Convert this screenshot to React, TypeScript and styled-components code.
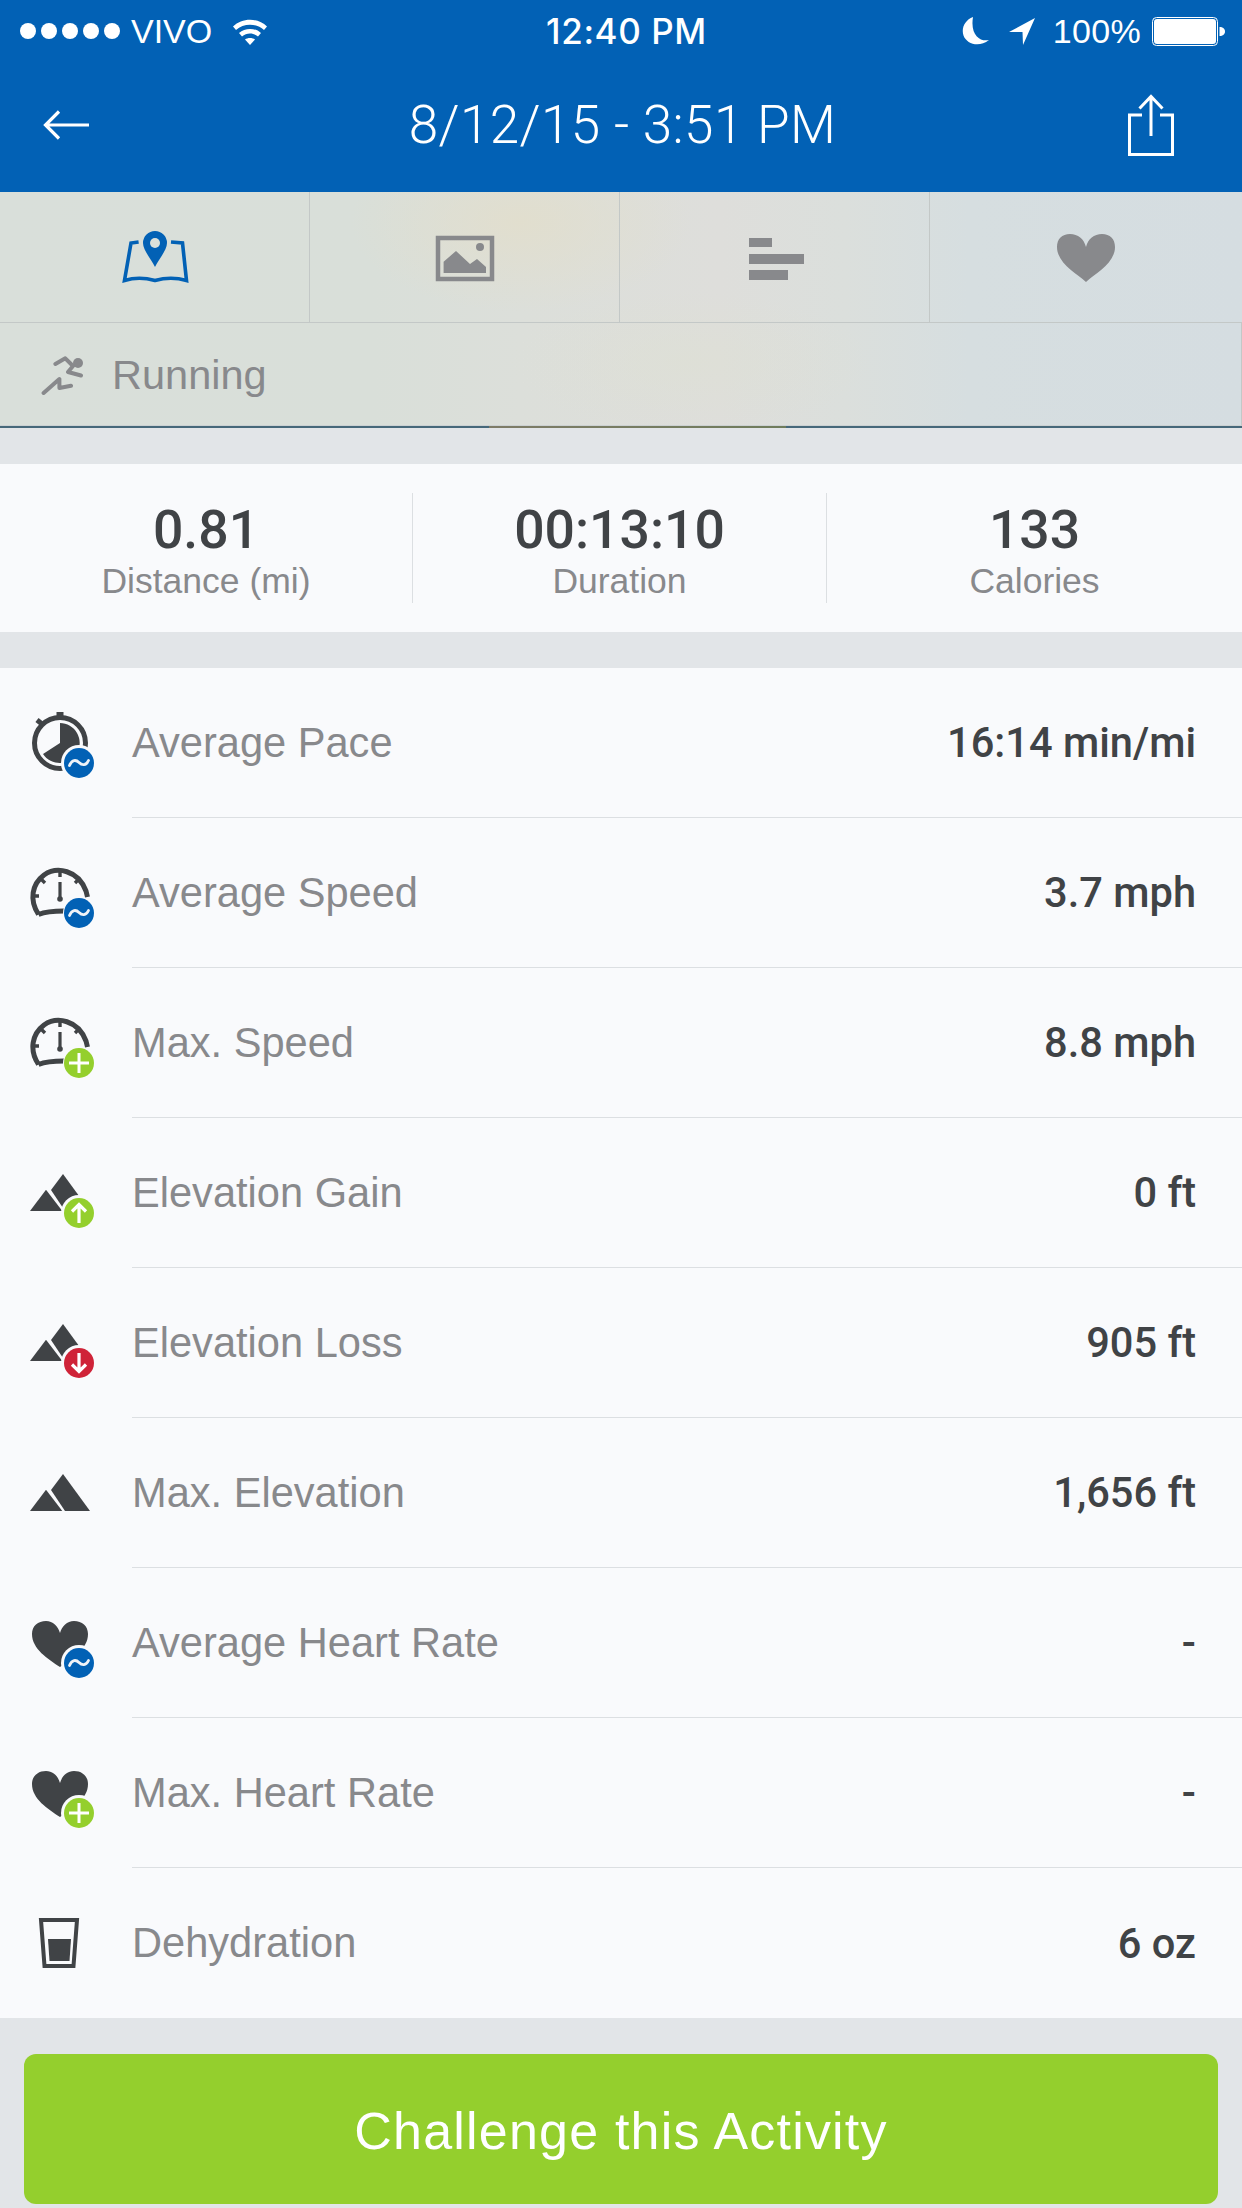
import React from "react";
import styled, { createGlobalStyle } from "styled-components";

const GlobalStyle = createGlobalStyle`
  html, body {
    margin: 0;
    padding: 0;
    background: #e2e5e8;
  }
  * {
    box-sizing: border-box;
  }
`;

const BLUE = "#0261b5";
const GREEN = "#94cf2d";
const RED = "#cf2338";
const DARK = "#404346";
const GREY = "#88898c";
const LIST_BG = "#f9fafc";

const Screen = styled.div`
  width: 1242px;
  height: 2208px;
  display: flex;
  flex-direction: column;
  background: #e2e5e8;
  font-family: "Liberation Sans", Arial, sans-serif;
  overflow: hidden;
`;

const Header = styled.header`
  height: 192px;
  background: ${BLUE};
  color: #fff;
  display: flex;
  flex-direction: column;
`;

const StatusBar = styled.div`
  height: 62px;
  display: grid;
  grid-template-columns: 1fr auto 1fr;
  align-items: center;
  padding: 0 17px 0 20px;
  font-size: 34px;
`;

const StatusLeft = styled.div`
  display: flex;
  align-items: center;
`;

const Dots = styled.div`
  display: flex;
  gap: 5px;
  margin-right: 11px;
`;

const Dot = styled.span`
  width: 16px;
  height: 16px;
  border-radius: 50%;
  background: #fff;
`;

const Carrier = styled.span`
  margin-right: 20px;
`;

const Clock = styled.div`
  font-family: Inter, "Liberation Sans", sans-serif;
  font-weight: 500;
  font-size: 35px;
  letter-spacing: 0.6px;
  margin-left: 8px;
`;

const StatusRight = styled.div`
  display: flex;
  align-items: center;
  justify-content: flex-end;
`;

const Percent = styled.span`
  margin: 0 11px 0 18px;
  letter-spacing: 0.3px;
`;

const NavBar = styled.div`
  flex: 1;
  display: flex;
  align-items: center;
  justify-content: space-between;
  padding: 0 68px 4px 43px;
`;

const NavTitle = styled.h1`
  margin: 0 0 0 28px;
  font-family: Roboto, "Liberation Sans", sans-serif;
  font-weight: 350;
  font-size: 53px;
  letter-spacing: 0.4px;
`;

const Hero = styled.section`
  display: flex;
  flex-direction: column;
  background:
    radial-gradient(ellipse 170px 90px at 520px 30px, rgba(226, 222, 204, 0.85), rgba(226, 222, 204, 0) 100%),
    radial-gradient(ellipse 180px 70px at 690px 170px, rgba(222, 224, 212, 0.6), rgba(222, 224, 212, 0) 100%),
    linear-gradient(90deg, #d9dfda 0%, #d9dfd9 30%, #dcdfda 42%, #dededb 58%, #dbdfdc 68%, #d6dee0 78%, #d5dde1 100%);
`;

const TabBar = styled.nav`
  height: 131px;
  display: grid;
  grid-template-columns: 310px 310px 310px 312px;
  border-bottom: 1px solid #c3c8c7;
`;

const TabCell = styled.div<{ $last?: boolean }>`
  display: flex;
  align-items: center;
  justify-content: center;
  border-right: ${(props) => (props.$last ? "none" : "1px solid #c3c8c7")};
`;

const ActivityRow = styled.div`
  height: 103px;
  display: flex;
  align-items: center;
  padding: 2px 0 0 41px;
  gap: 27px;
  font-size: 41.5px;
  color: ${GREY};
  border-bottom: 1px solid #ccd1d2;
  border-right: 1px solid #c3c8c7;
`;

const MapStrip = styled.div`
  height: 2px;
  background: linear-gradient(
    90deg,
    #46687a 0,
    #46687a 489px,
    #7e7c68 489px,
    #6f7c5c 786px,
    #46687a 786px
  );
`;

const Stats = styled.section`
  margin-top: 36px;
  height: 168px;
  background: ${LIST_BG};
  display: grid;
  grid-template-columns: 413px 414px 1fr;
  align-items: center;
`;

const Stat = styled.div<{ $divider?: boolean }>`
  height: 110px;
  display: flex;
  flex-direction: column;
  align-items: center;
  justify-content: center;
  padding-top: 5px;
  border-right: ${(props) => (props.$divider ? "1px solid #dcdfe2" : "none")};
`;

const StatValue = styled.div`
  font-family: Roboto, "Liberation Sans", sans-serif;
  font-weight: 500;
  font-size: 53.5px;
  line-height: 56px;
  margin-top: 1px;
  color: ${DARK};
`;

const StatLabel = styled.div`
  font-size: 35.5px;
  line-height: 40px;
  margin-top: 3px;
  color: ${GREY};
`;

const List = styled.section`
  margin-top: 36px;
  background: ${LIST_BG};
`;

const Row = styled.div`
  height: 150px;
  display: flex;
  align-items: center;
  padding-left: 20px;
`;

const IconSlot = styled.div`
  width: 112px;
  display: flex;
  align-items: center;
`;

const RowBody = styled.div<{ $last?: boolean }>`
  flex: 1;
  height: 100%;
  display: flex;
  align-items: center;
  justify-content: space-between;
  padding-right: 46px;
  border-bottom: ${(props) => (props.$last ? "none" : "1px solid #dcdfe2")};
`;

const RowLabel = styled.span`
  font-size: 41.6px;
  color: ${GREY};
`;

const RowValue = styled.span`
  font-family: Roboto, "Liberation Sans", sans-serif;
  font-weight: 500;
  font-size: 41.6px;
  color: ${DARK};
`;

const Footer = styled.footer`
  padding: 36px 24px 0;
`;

const ChallengeButton = styled.button`
  width: 100%;
  height: 150px;
  padding: 3px 0 0;
  border: none;
  border-radius: 12px;
  background: ${GREEN};
  color: #fff;
  font-family: "Liberation Sans", Arial, sans-serif;
  font-size: 52px;
  letter-spacing: 1.2px;
  cursor: pointer;
`;

const Svg = styled.svg`
  display: block;
  flex: none;
`;

const ArrowIcon = styled(Svg)`
  margin-left: 19px;
`;

type BadgeKind = "avg" | "plus" | "up" | "down";

// corner badge used by the metric icons, sits on a ring of the row colour
const Badge = ({ kind, ring = 18 }: { kind: BadgeKind; ring?: number }) => (
  <g transform="translate(59 60)">
    <circle r={ring} fill={LIST_BG} />
    <circle r={15} fill={kind === "avg" ? BLUE : kind === "down" ? RED : GREEN} />
    {kind === "avg" && (
      <path d="M-9.5 2.5C-7 -3.5 -3 -3.5 0 -0.5S7 3 9.5 -2.5" fill="none" stroke="#f0f3f8" strokeWidth="2.8" strokeLinecap="round" />
    )}
    {kind === "plus" && <path d="M-10 0H10M0 -10V10" stroke="#fff" strokeWidth="3" />}
    {kind === "up" && (
      <path d="M0 10V-8M-7 -1.5L0 -8.5L7 -1.5" fill="none" stroke="#fff" strokeWidth="3.2" />
    )}
    {kind === "down" && (
      <path d="M0 -10V8M-7 1.5L0 8.5L7 1.5" fill="none" stroke="#fff" strokeWidth="3.2" />
    )}
  </g>
);

const Stopwatch = () => (
  <>
    <circle cx="40" cy="40" r="25.5" fill="none" stroke={DARK} strokeWidth="5" />
    <rect x="36.5" y="9" width="7" height="6" fill={DARK} />
    <path d="M17 17L22 21" stroke={DARK} strokeWidth="5" />
    <path d="M40 40V20A20 20 0 1 1 23 51Z" fill={DARK} />
  </>
);

const Gauge = () => (
  <>
    <path
      d="M18.5 61.5C9 47 12 31 24 22C37 13 58 17 66 38L67.5 44M18.5 61.5C26 58.5 36 58 44 58"
      fill="none"
      stroke={DARK}
      strokeWidth="5"
    />
    <path d="M40 18V24M21 26L25 30M59 26L55 30M13 43H19" stroke={DARK} strokeWidth="3.4" />
    <path d="M40 29V45" stroke={DARK} strokeWidth="3.2" />
    <circle cx="40" cy="46" r="2.8" fill={DARK} />
  </>
);

const Mountains = () => (
  <>
    <path d="M10 58L26 36.7L42.3 58Z" fill={DARK} />
    <path d="M31 37L43 21L70 58H45Z" fill={DARK} />
  </>
);

const HeartShape = () => (
  <path
    d="M40 64C28 56 12 46 12 31C12 23 18 18 26 18C33 18 38 23 40 30C42 23 47 18 54 18C62 18 68 23 68 31C68 46 52 56 40 64Z"
    fill={DARK}
  />
);

const Cup = () => (
  <>
    <path d="M21 17H57L53.5 63H24.5Z" fill="none" stroke={DARK} strokeWidth="4" />
    <path d="M28 36H51L49.5 58H29.5Z" fill={DARK} />
  </>
);

const MetricIcon = ({ shape, badge }: { shape: string; badge?: BadgeKind }) => (
  <Svg width="80" height="80" viewBox="0 0 80 80">
    {shape === "stopwatch" && <Stopwatch />}
    {shape === "gauge" && <Gauge />}
    {shape === "mountains" && <Mountains />}
    {shape === "heart" && <HeartShape />}
    {shape === "cup" && <Cup />}
    {badge && <Badge kind={badge} ring={shape === "gauge" ? 16 : 18} />}
  </Svg>
);

const TabIcon = ({ children }: { children: React.ReactNode }) => (
  <Svg width="72" height="60" viewBox="0 0 72 60">
    {children}
  </Svg>
);

const metrics = [
  { shape: "stopwatch", badge: "avg", label: "Average Pace", value: "16:14 min/mi" },
  { shape: "gauge", badge: "avg", label: "Average Speed", value: "3.7 mph" },
  { shape: "gauge", badge: "plus", label: "Max. Speed", value: "8.8 mph" },
  { shape: "mountains", badge: "up", label: "Elevation Gain", value: "0 ft" },
  { shape: "mountains", badge: "down", label: "Elevation Loss", value: "905 ft" },
  { shape: "mountains", label: "Max. Elevation", value: "1,656 ft" },
  { shape: "heart", badge: "avg", label: "Average Heart Rate", value: "-" },
  { shape: "heart", badge: "plus", label: "Max. Heart Rate", value: "-" },
  { shape: "cup", label: "Dehydration", value: "6 oz" },
] as { shape: string; badge?: BadgeKind; label: string; value: string }[];

const stats = [
  { value: "0.81", label: "Distance (mi)" },
  { value: "00:13:10", label: "Duration" },
  { value: "133", label: "Calories" },
];

const App: React.FC = () => {
  return (
    <Screen>
      <GlobalStyle />
      <Header>
        <StatusBar>
          <StatusLeft>
            <Dots>
              {[0, 1, 2, 3, 4].map((i) => (
                <Dot key={i} />
              ))}
            </Dots>
            <Carrier>VIVO</Carrier>
            <Svg width="36" height="28" viewBox="0 0 36 28">
              <path d="M1 9.5C10 0.5 26 0.5 35 9.5L32 13C24.5 6 11.5 6 4 13Z" fill="#fff" />
              <path d="M7 16C13 10.5 23 10.5 29 16L26 19.5C21.5 15.5 14.5 15.5 10 19.5Z" fill="#fff" />
              <path d="M13 22.5C15.5 20.5 20.5 20.5 23 22.5L18 28Z" fill="#fff" />
            </Svg>
          </StatusLeft>
          <Clock>12:40 PM</Clock>
          <StatusRight>
            <Svg width="28" height="28" viewBox="0 0 28 28">
              <path d="M11 0C3 3 -1 11 1.5 18.5C4.5 27 17 31 27 23C18 25 8 18 11 0Z" fill="#fff" />
            </Svg>
            <ArrowIcon width="26" height="27" viewBox="0 0 26 27">
              <path d="M26 0L0 14H13.5L14 27Z" fill="#fff" />
            </ArrowIcon>
            <Percent>100%</Percent>
            <Svg width="73" height="29" viewBox="0 0 73 29">
              <rect x="0.5" y="0.5" width="65" height="28" rx="4" fill="none" stroke="#fff" />
              <rect x="2" y="2" width="62" height="25" rx="3" fill="#fff" />
              <path d="M67.5 10C71 10 73 12 73 14.5S71 19 67.5 19Z" fill="#fff" />
            </Svg>
          </StatusRight>
        </StatusBar>
        <NavBar>
          <Svg width="46" height="30" viewBox="0 0 46 30">
            <path d="M46 15H3M16 1.5L2.5 15L16 28.5" fill="none" stroke="#fff" strokeWidth="3.2" />
          </Svg>
          <NavTitle>8/12/15 - 3:51 PM</NavTitle>
          <Svg width="46" height="62" viewBox="0 0 46 62">
            <path d="M14 21H1.5V60.5H44.5V21H32" fill="none" stroke="#fff" strokeWidth="3" />
            <path d="M23 42V2M11.5 14.5L23 2.5L34.5 14.5" fill="none" stroke="#fff" strokeWidth="3" />
          </Svg>
        </NavBar>
      </Header>

      <Hero>
        <TabBar>
          <TabCell>
            <TabIcon>
              <path
                d="M19.6 15L12 16L5.5 53.5Q20 49 36 53.5Q52 49 67.5 53.5L63.5 16L52 15"
                fill="none"
                stroke={BLUE}
                strokeWidth="3.6"
              />
              <path d="M36 4A12 12 0 0 1 48 16C48 23 40 32 36 40C32 32 24 23 24 16A12 12 0 0 1 36 4Z" fill={BLUE} />
              <circle cx="36" cy="16" r="5" fill="#dce1da" />
            </TabIcon>
          </TabCell>
          <TabCell>
            <TabIcon>
              <rect x="9" y="11" width="54" height="41" fill="none" stroke={GREY} strokeWidth="4.5" />
              <circle cx="51" cy="20" r="4" fill={GREY} />
              <path d="M14.6 46V34.7L27 24L41 37L48 32L57 40V46Z" fill={GREY} />
            </TabIcon>
          </TabCell>
          <TabCell>
            <TabIcon>
              <rect x="10" y="11" width="23" height="9" fill={GREY} />
              <rect x="10" y="27" width="55" height="10" fill={GREY} />
              <rect x="10" y="43" width="39" height="10" fill={GREY} />
            </TabIcon>
          </TabCell>
          <TabCell $last>
            <TabIcon>
              <path
                d="M36 55C26 46 7 36 7 20C7 12 12 7 20 7C28 7 34 12 36 20C38 12 44 7 52 7C60 7 65 12 65 20C65 36 46 46 36 55Z"
                fill={GREY}
              />
            </TabIcon>
          </TabCell>
        </TabBar>
        <ActivityRow>
          <Svg width="44" height="40" viewBox="0 0 44 40">
            <circle cx="37" cy="8" r="5" fill={GREY} />
            <path
              d="M14.4 9L24.3 3.3L32 11L27 17L40 20.5M2.6 38L18.4 24V33L30 30.7"
              fill="none"
              stroke={GREY}
              strokeWidth="4"
              strokeLinecap="round"
              strokeLinejoin="round"
            />
          </Svg>
          <span>Running</span>
        </ActivityRow>
        <MapStrip />
      </Hero>

      <Stats>
        {stats.map((stat, i) => (
          <Stat key={stat.label} $divider={i < 2}>
            <StatValue>{stat.value}</StatValue>
            <StatLabel>{stat.label}</StatLabel>
          </Stat>
        ))}
      </Stats>

      <List>
        {metrics.map((metric, i) => (
          <Row key={metric.label}>
            <IconSlot>
              <MetricIcon shape={metric.shape} badge={metric.badge} />
            </IconSlot>
            <RowBody $last={i === metrics.length - 1}>
              <RowLabel>{metric.label}</RowLabel>
              <RowValue>{metric.value}</RowValue>
            </RowBody>
          </Row>
        ))}
      </List>

      <Footer>
        <ChallengeButton>Challenge this Activity</ChallengeButton>
      </Footer>
    </Screen>
  );
};

export default App;
